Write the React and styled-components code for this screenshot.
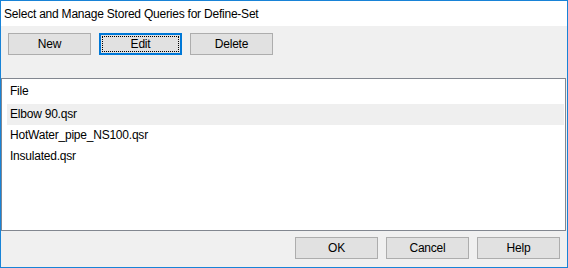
import React from "react";
import styled, { createGlobalStyle } from "styled-components";

const GlobalStyle = createGlobalStyle`
  html, body {
    margin: 0;
    padding: 0;
    background: #ffffff;
  }
  * {
    box-sizing: border-box;
  }
`;

const Window = styled.div`
  width: 568px;
  height: 268px;
  border: 1px solid #1883d7;
  display: flex;
  flex-direction: column;
  background: #f0f0f0;
  font-family: "Liberation Sans", Arial, sans-serif;
  font-size: 12px;
  letter-spacing: -0.22px;
  color: #000000;
`;

const TitleBar = styled.div`
  height: 25px;
  flex: none;
  background: #ffffff;
  padding-left: 3px;
  line-height: 27px;
`;

const Toolbar = styled.div`
  display: flex;
  gap: 8px;
  padding: 7px 0 0 7px;
  height: 52px;
  flex: none;
`;

const Button = styled.button`
  position: relative;
  width: 83px;
  height: 22px;
  padding: 0;
  border: 1px solid ${(p) => (p.$focused ? "#0078d7" : "#adadad")};
  box-shadow: ${(p) => (p.$focused ? "inset 0 0 0 1px #0078d7" : "none")};
  background: #e1e1e1;
  font-family: inherit;
  font-size: 12px;
  letter-spacing: inherit;
  color: #000000;
  &::after {
    content: "";
    display: ${(p) => (p.$focused ? "block" : "none")};
    position: absolute;
    inset: 2px;
    border: 1px dotted #000000;
  }
`;

const ListBox = styled.div`
  flex: 1;
  margin-right: 1px;
  border: 1px solid #828790;
  background: #ffffff;
  padding: 0 1px 0 5px;
`;

const HeaderRow = styled.div`
  height: 25px;
  line-height: 25px;
  padding-left: 3px;
`;

const Row = styled.div`
  height: 21px;
  line-height: 21px;
  padding-left: 3px;
  background: ${(p) => (p.$hover ? "#efefef" : "transparent")};
`;

const Footer = styled.div`
  display: flex;
  justify-content: flex-end;
  gap: 8px;
  height: 36px;
  flex: none;
  padding: 6px 7px 0 0;
`;

const files = ["Elbow 90.qsr", "HotWater_pipe_NS100.qsr", "Insulated.qsr"];

export default function App() {
  return (
    <>
      <GlobalStyle />
      <Window>
        <TitleBar>Select and Manage Stored Queries for Define-Set</TitleBar>
        <Toolbar>
          <Button>New</Button>
          <Button $focused>Edit</Button>
          <Button>Delete</Button>
        </Toolbar>
        <ListBox>
          <HeaderRow>File</HeaderRow>
          {files.map((f, i) => (
            <Row key={f} $hover={i === 0}>
              {f}
            </Row>
          ))}
        </ListBox>
        <Footer>
          <Button>OK</Button>
          <Button>Cancel</Button>
          <Button>Help</Button>
        </Footer>
      </Window>
    </>
  );
}
